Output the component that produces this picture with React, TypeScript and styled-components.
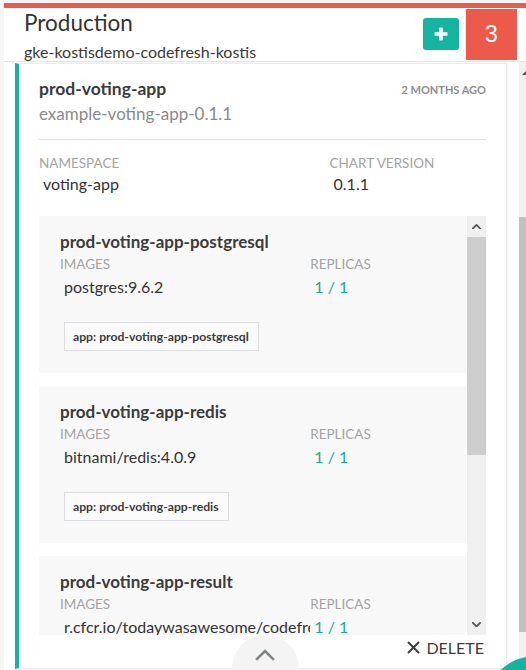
import React from "react";
import styled, { createGlobalStyle } from "styled-components";

const GlobalStyle = createGlobalStyle`
  html, body { margin: 0; padding: 0; height: 100%; }
  body {
    background: #f4f6f6;
    font-family: Lato, "Open Sans", "Liberation Sans", sans-serif;
    color: #3b3b3b;
    overflow: hidden;
  }
  * { box-sizing: border-box; }
`;

const TEAL = "#14b4a0";
const RED = "#ec5a4b";

const Page = styled.div`
  position: relative;
  height: 670px;
  overflow: hidden;
  padding: 3px 0 0 4px;
`;

const Panel = styled.div`
  display: flex;
  flex-direction: column;
  height: 667px;
  background: #fff;
  border-top: 5px solid ${RED};
`;

const Header = styled.header`
  display: flex;
  align-items: flex-start;
  justify-content: space-between;
  height: 54px;
  padding: 0 9px 0 20px;
  border-bottom: 1px solid #e3e5e6;
  flex: none;
`;

const TitleBlock = styled.div`
  display: flex;
  flex-direction: column;
  padding-top: 2px;
`;

const Title = styled.h1`
  margin: 0;
  font-size: 22.5px;
  font-weight: 400;
  line-height: 26px;
  color: #333;
`;

const Subtitle = styled.div`
  margin-top: 6px;
  font-size: 16px;
  line-height: 19px;
  color: #3a3a3a;
`;

const Actions = styled.div`
  display: flex;
  align-items: flex-start;
  gap: 7px;
  padding-top: 1px;
`;

const AddButton = styled.button`
  width: 36px;
  height: 32px;
  margin-top: 9px;
  border: none;
  border-radius: 3px;
  background: ${TEAL};
  display: flex;
  align-items: center;
  justify-content: center;
  padding: 0;
  cursor: pointer;
`;

const CountBadge = styled.div`
  width: 51px;
  height: 51px;
  background: ${RED};
  color: #fff;
  font-family: "Liberation Sans", Arial, sans-serif;
  font-size: 23px;
  display: flex;
  align-items: center;
  justify-content: center;
`;

const Body = styled.div`
  flex: 1;
  display: flex;
  min-height: 0;
`;

const CardColumn = styled.div`
  flex: 1;
  padding: 1px 12px 0 11px;
  min-width: 0;
`;

const Card = styled.section`
  position: relative;
  background: #fff;
  border: 1px solid #ebebeb;
  border-left: 4px solid ${TEAL};
  box-shadow: 1px 0 3px rgba(0, 0, 0, 0.06);
  padding: 15px 20px 0 20px;
  display: flex;
  flex-direction: column;
`;

const CardHead = styled.div`
  display: flex;
  justify-content: space-between;
  align-items: center;
  height: 20px;
`;

const ReleaseName = styled.h2`
  margin: 0;
  font-size: 17.5px;
  font-weight: 700;
  line-height: 20px;
  color: #3b3b3b;
`;

const Age = styled.span`
  font-size: 11px;
  font-weight: 700;
  color: #8d8d8d;
  text-transform: uppercase;
`;

const ChartName = styled.div`
  margin-top: 5px;
  font-size: 17px;
  line-height: 20px;
  color: #8a8a8a;
`;

const Divider = styled.hr`
  margin: 15px 0 0 0;
  border: none;
  border-top: 1px solid #dedede;
  height: 0;
`;

const FieldGrid = styled.div<{ $top: number }>`
  display: grid;
  grid-template-columns: 65% 35%;
  margin-top: ${(p) => p.$top}px;
`;

const Label = styled.div`
  font-size: 13.5px;
  line-height: 16px;
  color: #a3a3a3;
  text-transform: uppercase;
`;

const Value = styled.div<{ $accent?: boolean; $gap: number }>`
  margin-top: ${(p) => p.$gap}px;
  padding-left: 4px;
  font-size: 16px;
  line-height: 18px;
  color: ${(p) => (p.$accent ? "#16a898" : "#333")};
  white-space: nowrap;
  overflow: hidden;
`;

const Field = styled.div`
  display: flex;
  flex-direction: column;
  min-width: 0;
`;

const ServicesFrame = styled.div`
  margin-top: 23px;
  height: 419px;
  display: flex;
  overflow: hidden;
`;

const ServicesList = styled.div`
  flex: 1;
  display: flex;
  flex-direction: column;
  gap: 13px;
  padding-right: 1px;
  min-width: 0;
`;

const Service = styled.article`
  flex: none;
  background: #f8f8f8;
  padding: 16px 21px 22px 21px;
`;

const ServiceName = styled.h3`
  margin: 0;
  font-size: 17px;
  font-weight: 700;
  line-height: 20px;
  color: #3b3b3b;
`;

const Tag = styled.span`
  display: inline-flex;
  align-items: center;
  height: 29px;
  margin: 26px 0 0 4px;
  padding: 0 9px 0 8px;
  border: 1px solid #dcdde0;
  background: #fafafa;
  font-size: 12.2px;
  font-weight: 700;
  color: #3b3b3b;
`;

const InnerScrollbar = styled.div`
  width: 19px;
  flex: none;
  display: flex;
  flex-direction: column;
  background: #f0f0f0;
`;

const ScrollArrow = styled.div`
  height: 21px;
  flex: none;
  display: flex;
  align-items: center;
  justify-content: center;
  background: #f0f0f0;
`;

const InnerThumb = styled.div`
  height: 218px;
  flex: none;
  background: #cdcdcd;
`;

const InnerTrack = styled.div`
  flex: 1;
`;

const CardFooter = styled.div`
  height: 33px;
  display: flex;
  justify-content: flex-end;
  align-items: flex-start;
  padding: 3px 2px 0 0;
`;

const DeleteButton = styled.button`
  display: flex;
  align-items: center;
  gap: 6px;
  border: none;
  background: none;
  padding: 0;
  font-family: Lato, "Open Sans", sans-serif;
  font-size: 16px;
  line-height: 19px;
  color: #3b3b3b;
  text-transform: uppercase;
  cursor: pointer;
`;

const ExpandButton = styled.button`
  position: absolute;
  left: 50%;
  bottom: -34px;
  margin-left: -31px;
  width: 67px;
  height: 67px;
  border-radius: 50%;
  border: none;
  background: #f4f4f4;
  display: flex;
  justify-content: center;
  align-items: flex-start;
  padding: 14px 0 0 0;
  cursor: pointer;
`;

const PageScrollbar = styled.div`
  width: 7px;
  flex: none;
  display: flex;
  flex-direction: column;
  background: #f1f1f1;
`;

const PageScrollArrow = styled.div`
  height: 155px;
  flex: none;
  display: flex;
  justify-content: flex-end;
  padding-top: 9px;
`;

const PageThumb = styled.div`
  height: 415px;
  flex: none;
  background: #c1c1c1;
`;

const Fab = styled.div`
  position: absolute;
  left: 485px;
  top: 656px;
  width: 101px;
  height: 101px;
  border-radius: 50%;
  background: ${TEAL};
`;

const Chevron = ({ dir, size = 9, color = "#555", stroke = 2 }: { dir: "up" | "down"; size?: number; color?: string; stroke?: number }) => (
  <svg width={size} height={size * 0.6} viewBox="0 0 10 6" fill="none">
    <polyline
      points={dir === "up" ? "1,5 5,1 9,5" : "1,1 5,5 9,1"}
      stroke={color}
      strokeWidth={stroke}
      strokeLinecap="square"
    />
  </svg>
);

const services = [
  { name: "prod-voting-app-postgresql", image: "postgres:9.6.2", replicas: "1 / 1", tag: "app: prod-voting-app-postgresql" },
  { name: "prod-voting-app-redis", image: "bitnami/redis:4.0.9", replicas: "1 / 1", tag: "app: prod-voting-app-redis" },
  { name: "prod-voting-app-result", image: "r.cfcr.io/todaywasawesome/codefresh-voting-result", replicas: "1 / 1", tag: "app: prod-voting-app-result" },
];

export default function App() {
  return (
    <>
      <GlobalStyle />
      <Page>
        <Panel>
          <Header>
            <TitleBlock>
              <Title>Production</Title>
              <Subtitle>gke-kostisdemo-codefresh-kostis</Subtitle>
            </TitleBlock>
            <Actions>
              <AddButton aria-label="add">
                <svg width="14" height="14" viewBox="0 0 14 14">
                  <rect x="5.2" y="0.5" width="3.6" height="13" rx="0.8" fill="#fff" />
                  <rect x="0.5" y="5.2" width="13" height="3.6" rx="0.8" fill="#fff" />
                </svg>
              </AddButton>
              <CountBadge>3</CountBadge>
            </Actions>
          </Header>
          <Body>
            <CardColumn>
              <Card>
                <CardHead>
                  <ReleaseName>prod-voting-app</ReleaseName>
                  <Age>2 months ago</Age>
                </CardHead>
                <ChartName>example-voting-app-0.1.1</ChartName>
                <Divider />
                <FieldGrid $top={15}>
                  <Field>
                    <Label>Namespace</Label>
                    <Value $gap={4}>voting-app</Value>
                  </Field>
                  <Field>
                    <Label>Chart version</Label>
                    <Value $gap={4}>0.1.1</Value>
                  </Field>
                </FieldGrid>
                <ServicesFrame>
                  <ServicesList>
                    {services.map((s) => (
                      <Service key={s.name}>
                        <ServiceName>{s.name}</ServiceName>
                        <FieldGrid $top={4}>
                          <Field>
                            <Label>Images</Label>
                            <Value $gap={6}>{s.image}</Value>
                          </Field>
                          <Field>
                            <Label>Replicas</Label>
                            <Value $gap={6} $accent>{s.replicas}</Value>
                          </Field>
                        </FieldGrid>
                        <Tag>{s.tag}</Tag>
                      </Service>
                    ))}
                  </ServicesList>
                  <InnerScrollbar>
                    <ScrollArrow>
                      <Chevron dir="up" />
                    </ScrollArrow>
                    <InnerThumb />
                    <InnerTrack />
                    <ScrollArrow>
                      <Chevron dir="down" />
                    </ScrollArrow>
                  </InnerScrollbar>
                </ServicesFrame>
                <CardFooter>
                  <DeleteButton>
                    <svg width="13" height="13" viewBox="0 0 13 13">
                      <line x1="1" y1="1" x2="12" y2="12" stroke="#3b3b3b" strokeWidth="2" />
                      <line x1="12" y1="1" x2="1" y2="12" stroke="#3b3b3b" strokeWidth="2" />
                    </svg>
                    Delete
                  </DeleteButton>
                </CardFooter>
                <ExpandButton aria-label="collapse">
                  <Chevron dir="up" size={20} color="#7f8587" stroke={1.3} />
                </ExpandButton>
              </Card>
            </CardColumn>
            <PageScrollbar>
              <PageScrollArrow>
                <svg width="4" height="4" viewBox="0 0 4 4">
                  <polygon points="0,4 4,0 4,4" fill="#555" />
                </svg>
              </PageScrollArrow>
              <PageThumb />
            </PageScrollbar>
          </Body>
        </Panel>
        <Fab />
      </Page>
    </>
  );
}
